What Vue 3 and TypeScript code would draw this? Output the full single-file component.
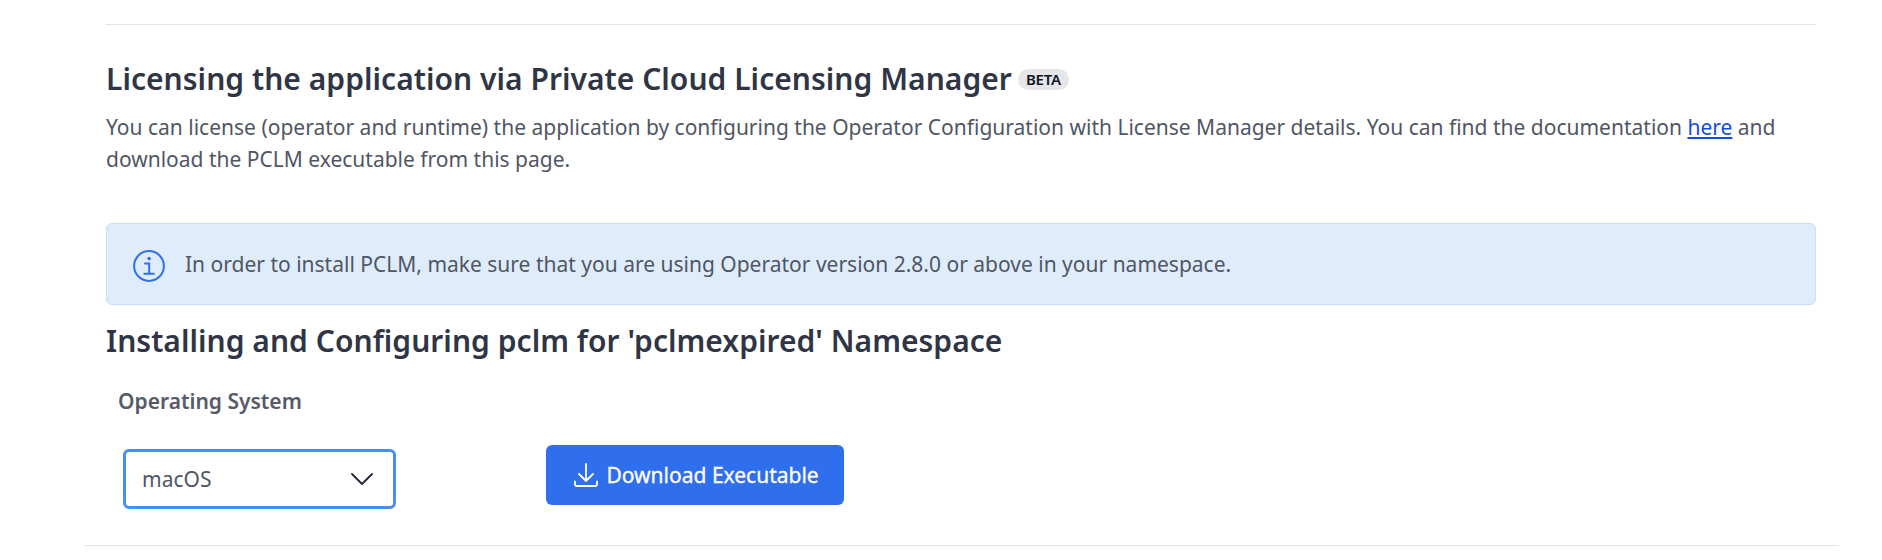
<script setup lang="ts">
const os: string = 'macOS'
</script>

<template>
  <main class="page">
    <section class="panel">
      <h2 class="title">Licensing the application via Private Cloud Licensing Manager<span class="badge">BETA</span></h2>
      <p class="copy">You can license (operator and runtime) the application by configuring the Operator Configuration with License Manager details. You can find the documentation <a href="#">here</a> and download the PCLM executable from this page.</p>
      <div class="notice">
        <svg class="info" viewBox="0 0 32 32" fill="none" stroke="#2f70ee" stroke-width="2">
          <circle cx="16" cy="16" r="14.9" />
          <path d="M12 13.4h4.2v10M11.3 23.7h9.6" stroke-linecap="round" />
          <circle cx="16.1" cy="8.6" r="1.8" fill="#2f70ee" stroke="none" />
        </svg>
        <span>In order to install PCLM, make sure that you are using Operator version 2.8.0 or above in your namespace.</span>
      </div>
      <h2 class="title second">Installing and Configuring pclm for 'pclmexpired' Namespace</h2>
      <div class="label">Operating System</div>
      <div class="controls">
        <button class="select"><span>{{ os }}</span>
          <svg class="chevron" viewBox="0 0 22 12" fill="none" stroke="#20263a" stroke-width="1.8" stroke-linecap="round" stroke-linejoin="round"><path d="M1 1l10 10L21 1" /></svg>
        </button>
        <button class="download">
          <svg class="dl" viewBox="0 0 24 24" fill="none" stroke="#fff" stroke-width="1.8" stroke-linecap="round" stroke-linejoin="round"><path d="M12 1v17M5 11l7 7 7-7M1 18.500v3q0 1.500 1.500 1.500h19q1.500 0 1.500-1.500v-3" /></svg>
          <span>Download Executable</span>
        </button>
      </div>
    </section>
    <div class="rule"></div>
  </main>
</template>

<style>
body { margin: 0; background: #fff; }
</style>
<style scoped>
* { box-sizing: border-box; }
.page { height: 560px; padding: 24px 43px 0 84px; overflow: hidden; font-family: "Noto Sans", sans-serif; color: #505664; font-size: 21px; }
.panel { margin: 0 23px 0 22px; height: 521px; border-top: 1px solid #e4e4e6; padding-top: 33px; }
.title { margin: 0; font-size: 30px; line-height: 42px; letter-spacing: .035px; font-weight: 600; color: #2f3544; white-space: nowrap; display: flex; align-items: center; }
.badge { margin-left: 6px; width: 51px; height: 21px; text-align: center; font-size: 15px; line-height: 20px; letter-spacing: -.2px; border-radius: 11px; background: #e6e6e8; color: #0e1324; }
.copy { margin: 11px 0 0; line-height: 32px; }
.copy a { color: #174bdc; text-decoration-thickness: 2px; text-underline-offset: 2px; }
.notice { margin-top: 48px; height: 82px; border: 1px solid #c7dffa; border-radius: 6px; background: #dfecfc; display: flex; align-items: center; padding-left: 26px; gap: 20px; }
.info { width: 32px; height: 32px; margin-top: 3px; }
.second { margin-top: 15px; }
.label { margin: 23px 0 0 12px; line-height: 32px; font-weight: 600; color: #555b68; }
.controls { display: flex; align-items: flex-start; margin: 28px 0 0 17px; }
button { font: inherit; }
.select { width: 273px; height: 60px; margin-top: 4px; border: 3px solid #478ff3; border-radius: 6px; background: #fff; color: #505664; display: flex; align-items: center; justify-content: space-between; padding: 0 20px 0 16px; }
.chevron { width: 22px; height: 12px; }
.download { margin-left: 150px; width: 298px; height: 60px; border: 0; border-radius: 6px; background: #2f6fed; color: #fff; display: flex; align-items: center; padding: 0 0 0 27.500px; gap: 9px; white-space: nowrap; font-weight: 400; -webkit-text-stroke: .3px #fff; }
.dl { width: 24px; height: 24px; flex: none; margin-top: -1px; }
.rule { height: 1px; background: #e4e4e6; }
</style>
